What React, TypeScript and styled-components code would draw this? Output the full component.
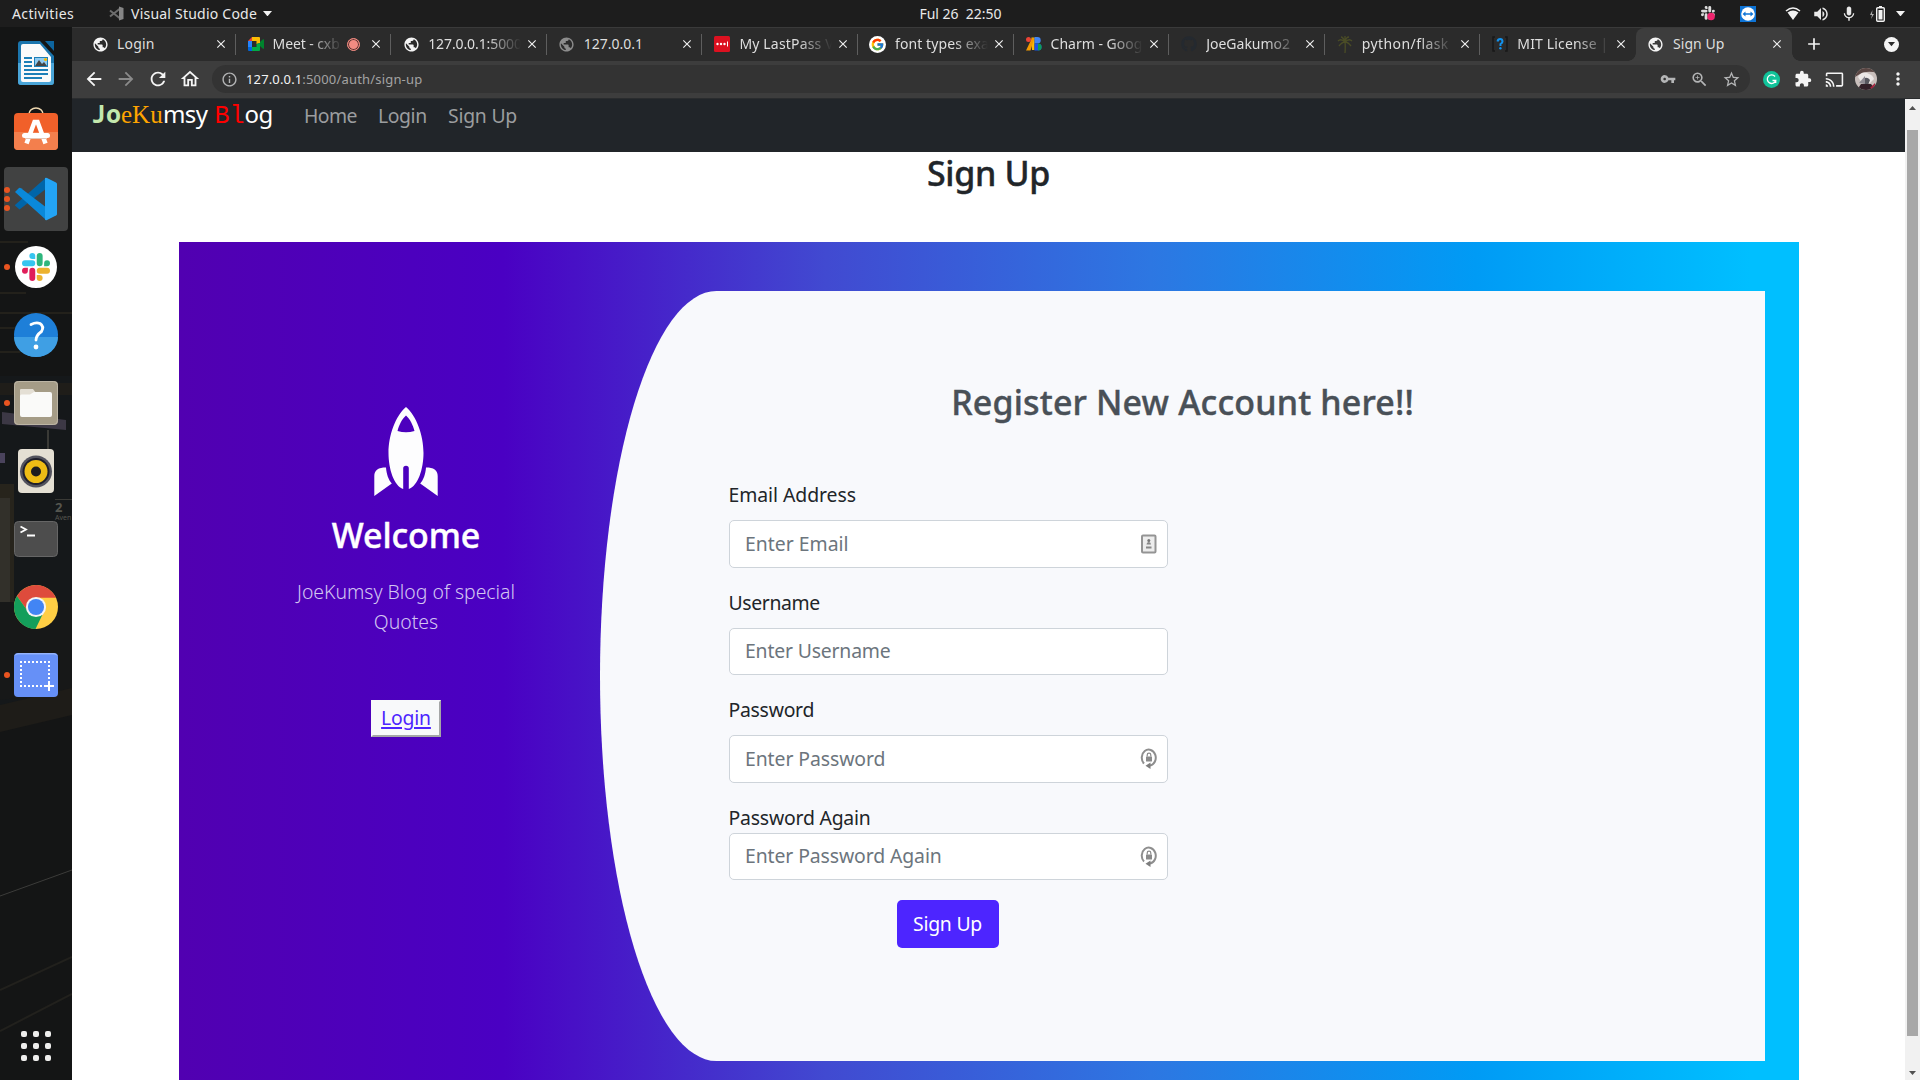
import React from 'react';
import styled, { createGlobalStyle, css } from 'styled-components';
import {
  MdArrowBack, MdArrowForward, MdRefresh, MdOutlineHome, MdInfoOutline, MdVpnKey, MdZoomIn,
  MdStarBorder, MdExtension, MdCast, MdMoreVert, MdPublic, MdMic, MdClose, MdAdd, MdVolumeUp,
} from 'react-icons/md';
import { FcGoogle } from 'react-icons/fc';
import { FaGithub } from 'react-icons/fa';

const sans = '"Noto Sans", "Open Sans", sans-serif';

const GlobalStyle = createGlobalStyle`
  *, *::before, *::after { box-sizing: border-box; }
  body { margin: 0; background: #fff; font-family: ${sans}; }
  svg { display: block; flex: none; }
`;

const Screen = styled.div`
  width: 1920px;
  height: 1080px;
  overflow: hidden;
  display: grid;
  grid-template: 27px 1fr / 72px 1fr;
`;

const Label = styled.span<{ ls?: number }>`
  letter-spacing: ${(p) => p.ls ?? 0}px;
  white-space: pre;
`;

/* ---------- system bar ---------- */

const SystemBar = styled.header`
  grid-column: 1 / -1;
  background: #1d1d1d;
  color: #e9e9e9;
  display: grid;
  grid-template-columns: 1fr auto 1fr;
  align-items: center;
  font-size: 14px;
  line-height: 27px;
  padding: 0 15px 0 12px;
`;

const Clock = styled(Label)`
  margin-left: 4px;
`;

const SystemLeft = styled.div`
  display: flex;
  align-items: center;
`;

const AppMenu = styled.div`
  display: flex;
  align-items: center;
  margin-left: 35px;
`;

const AppName = styled(Label)`
  margin: 0 6px 0 7px;
`;

const Tray = styled.div`
  display: flex;
  align-items: center;
  justify-content: flex-end;
`;

const TrayItem = styled.span<{ gap: number }>`
  display: flex;
  margin-left: ${(p) => p.gap}px;
`;

/* ---------- dock ---------- */

const Dock = styled.nav`
  position: relative;
  background: #141515;
  display: flex;
  flex-direction: column;
  gap: 4px;
  padding: 4px 4px 17px;
`;

const Wallpaper = styled.svg`
  position: absolute;
  inset: 0;
`;

const DockItem = styled.div<{ active?: boolean }>`
  position: relative;
  height: 64px;
  display: flex;
  align-items: center;
  justify-content: center;
  border-radius: 4px;
  ${(p) => p.active && css`background: #414242;`}
`;

const Running = styled.span`
  position: absolute;
  left: 0;
  top: 0;
  bottom: 0;
  display: flex;
  flex-direction: column;
  justify-content: center;
  gap: 3px;
`;

const Dot = styled.i`
  width: 6px;
  height: 6px;
  border-radius: 50%;
  background: #e95420;
`;

const AppsButton = styled.div`
  position: relative;
  margin-top: auto;
  align-self: center;
  width: 30px;
  display: grid;
  grid-template-columns: repeat(3, 6px);
  gap: 6px;
  margin-bottom: 2px;
`;

const AppsDot = styled.i`
  height: 6px;
  border-radius: 2px;
  background: #eeeeec;
`;

/* ---------- browser ---------- */

const Browser = styled.main`
  display: grid;
  grid-template-rows: 34px 38px 1fr;
  min-width: 0;
  min-height: 0;
`;

const TabStrip = styled.div`
  background: #2b2b2b;
  border-top: 1px solid #3a3a3a;
  display: flex;
  padding-left: 8px;
`;

const TabBox = styled.div<{ active?: boolean; divider?: boolean }>`
  position: relative;
  width: 155.6px;
  height: 33px;
  flex: none;
  display: flex;
  align-items: center;
  padding: 0 8px 1px 11px;
  color: #dedede;
  font-size: 14px;
  ${(p) => p.divider && css`
    &::after {
      content: '';
      position: absolute;
      right: 0;
      top: 6px;
      width: 1px;
      height: 21px;
      background: #5e5e5e;
    }
  `}
  ${(p) => p.active && css`
    background: #3d3d3d;
    border-radius: 8px 8px 0 0;
    &::before, &::after {
      content: '';
      position: absolute;
      bottom: 0;
      width: 8px;
      height: 8px;
    }
    &::before {
      left: -8px;
      background: radial-gradient(circle at 0 0, transparent 7.5px, #3d3d3d 8px);
    }
    &::after {
      right: -8px;
      background: radial-gradient(circle at 100% 0, transparent 7.5px, #3d3d3d 8px);
    }
  `}
`;

const Favicon = styled.span<{ dim?: boolean }>`
  width: 18px;
  height: 18px;
  flex: none;
  display: flex;
  align-items: center;
  justify-content: center;
  color: ${(p) => (p.dim ? '#8c8c8c' : '#f5f5f5')};
`;

const TabTitle = styled.span<{ ls: number; fade?: boolean }>`
  flex: 1;
  min-width: 0;
  margin-left: 8px;
  white-space: nowrap;
  line-height: 20px;
  letter-spacing: ${(p) => p.ls}px;
  ${(p) => p.fade && css`
    mask-image: linear-gradient(to right, #000 calc(100% - 34px), transparent 100%);
  `}
`;

const TabClose = styled.span`
  margin-left: 4px;
  display: flex;
  color: #f0f0f0;
`;

const Recording = styled.span`
  width: 13px;
  height: 13px;
  margin: 0 5px 0 4px;
  flex: none;
  border-radius: 50%;
  background: #f28b82;
  border: 1px solid #f28b82;
  box-shadow: inset 0 0 0 1px #5a3431;
`;

const NewTab = styled.span`
  display: flex;
  align-items: center;
  padding: 0 0 1px 12px;
  color: #f5f5f5;
`;

const TabSearch = styled.span`
  margin: 9px 21px 0 auto;
  width: 15px;
  height: 15px;
  border-radius: 50%;
  background: #f5f5f5;
  display: flex;
  align-items: center;
  justify-content: center;
`;

const Toolbar = styled.div`
  background: #3d3d3d;
  border-bottom: 1px solid #2a2c2e;
  display: flex;
  align-items: center;
  padding: 0 12px 1px 0;
  color: #f5f5f5;
`;

const NavButtons = styled.div`
  width: 140px;
  display: flex;
  gap: 10px;
  padding-left: 11px;
`;

const Omnibox = styled.div`
  flex: 1;
  height: 28px;
  border-radius: 14px;
  background: #333333;
  display: flex;
  align-items: center;
  padding: 0 9px 0 9px;
  color: #b4b5b6;
`;

const Url = styled.div`
  flex: 1;
  margin-left: 8px;
  font-size: 13px;
  line-height: 20px;
  color: #a3a3a3;
`;

const UrlHost = styled(Label)`
  color: #f4f4f4;
`;

const OmniActions = styled.div`
  display: flex;
  align-items: center;
  gap: 13.5px;
`;

const Extensions = styled.div`
  display: flex;
  align-items: center;
  margin-left: 13px;
`;

const Grammarly = styled.span`
  width: 17px;
  height: 17px;
  border-radius: 50%;
  background: #11c39a;
  display: flex;
  align-items: center;
  justify-content: center;
  margin-right: 14px;
`;

const CastButton = styled.span`
  display: flex;
  margin-left: 13px;
`;

const Avatar = styled.span`
  width: 22px;
  height: 22px;
  border-radius: 50%;
  overflow: hidden;
  margin: 0 11px 0 11px;
`;

/* ---------- web page ---------- */

const Viewport = styled.div`
  display: grid;
  grid-template-columns: 1fr 15px;
  min-height: 0;
`;

const Page = styled.div`
  overflow: hidden;
  background: #fff;
  color: #212529;
  font-size: 19.4px;
  line-height: 30px;
`;

const Navbar = styled.div`
  height: 53px;
  background: #212529;
  display: flex;
  align-items: flex-start;
  padding-left: 19px;
`;

const Brand = styled.div`
  width: 213px;
  margin-top: -1px;
  display: flex;
  align-items: baseline;
  color: #fff;
  font-size: 24px;
  line-height: 30px;
  white-space: pre;
`;

const BrandMint = styled.b`
  width: 30px;
  color: #c3e8ad;
  font: 700 25px/30px "Noto Sans Mono", "DejaVu Sans Mono", monospace;
`;

const BrandOrange = styled.span`
  width: 42px;
  color: #ffa500;
  font: 25px/30px "Liberation Serif", serif;
`;

const BrandRed = styled.span`
  width: 30px;
  margin-left: 7px;
  color: #ff0000;
  font: 25px/30px "Liberation Mono", monospace;
`;

const NavLink = styled.a<{ w: number; ls: number }>`
  width: ${(p) => p.w}px;
  padding-top: 2px;
  color: #9b9d9f;
  letter-spacing: ${(p) => p.ls}px;
`;

const headingFont = css`
  font-size: 34px;
  font-weight: 500;
  line-height: 42px;
  -webkit-text-stroke: 0.4px currentColor;
`;

const PageTitle = styled.h3`
  ${headingFont}
  margin: 0 0 48px;
  text-align: center;
  letter-spacing: -0.33px;
`;

const Register = styled.section`
  width: 1620px;
  height: 860px;
  margin-left: 107px;
  padding: 49px 34px 0 0;
  display: flex;
  background: linear-gradient(to right, #5100b1, #4a00c3 20%, #414ad1 40%, #2d77e2 60%, #009bf5 80%, #00bfff 97%);
`;

const Welcome = styled.aside`
  width: 421px;
  padding: 116px 0 0 33px;
  display: flex;
  flex-direction: column;
  align-items: center;
  color: #fff;
`;

const WelcomeTitle = styled.h3`
  ${headingFont}
  margin: 17px 0 21px;
  letter-spacing: -0.1px;
`;

const WelcomeText = styled.p`
  width: 230px;
  margin: 0 0 63px;
  text-align: center;
  font-weight: 300;
  color: #d3c6f1;
`;

const LoginButton = styled.a`
  width: 70px;
  height: 37px;
  background: #f8f9fa;
  border: 2px solid;
  border-color: #f8f9fa #a5a6a7 #a5a6a7 #f8f9fa;
  text-align: center;
  line-height: 31px;
  letter-spacing: -0.2px;
`;

const LoginText = styled.span`
  color: #4d25ff;
  text-decoration: underline;
  text-decoration-thickness: 2px;
  text-underline-offset: 2px;
`;

const Card = styled.div`
  flex: 1;
  height: 770px;
  padding-top: 90px;
  background: #f8f9fc;
  border-top-left-radius: 10% 50%;
  border-bottom-left-radius: 10% 50%;
`;

const CardTitle = styled.h3`
  ${headingFont}
  margin: 0 0 57px;
  text-align: center;
  letter-spacing: 0.15px;
  color: #495057;
`;

const Form = styled.form`
  width: 439px;
  margin-left: 128.5px;
  display: flex;
  flex-direction: column;
  align-items: center;
`;

const Field = styled.div<{ tight?: boolean }>`
  width: 100%;
  display: flex;
  flex-direction: column;
  gap: ${(p) => (p.tight ? 0 : 10)}px;
  margin-bottom: 20px;
`;

const FieldBox = styled.div`
  height: 47.5px;
  display: flex;
  align-items: center;
  justify-content: space-between;
  padding: 0 9px 0 15.5px;
  background: #fff;
  border: 1px solid #ced4da;
  border-radius: 5px;
  color: #6c757d;
`;

const Submit = styled.button`
  width: 102px;
  height: 48px;
  margin-right: 1px;
  border: 0;
  border-radius: 5px;
  background: #4d25ff;
  color: #fff;
  font: 19.4px/30px ${sans};
  letter-spacing: -0.24px;
  white-space: nowrap;
  padding: 0;
`;

const Scrollbar = styled.div`
  background: #f1f1f1;
  display: flex;
  flex-direction: column;
  align-items: center;
  padding: 7px 0 5px;
`;

const Thumb = styled.div`
  width: 11px;
  height: 906px;
  margin: 20px 0 auto;
  background: #a8a8a8;
`;

/* ---------- drawings ---------- */

const VsCode = () => (
  <svg width="44" height="44" viewBox="0 0 44 44">
    <path d="M1 28.5 L5.5 32.5 L33 11 V1 L31 1.5 L1 28 Z" fill="#0065a9" />
    <path d="M1 15 L5 11 Q6 10.5 7 11.2 L33 31 V43 L31 42 Z" fill="#0a89da" />
    <path d="M31 1 Q32 0.5 33 1 L42 5.5 Q43 6 43 7 V37 Q43 38 42 38.5 L33 43 Q31.5 43.6 31 42.6 Z" fill="#23a4f5" />
  </svg>
);

const slackArm =
  'M8.834 5.042a2.528 2.528 0 0 1-2.521-2.52A2.528 2.528 0 0 1 8.834 0a2.528 2.528 0 0 1 2.521 2.522v2.52H8.834z' +
  'M8.834 6.313a2.528 2.528 0 0 1 2.521 2.521 2.528 2.528 0 0 1-2.521 2.521H2.522A2.528 2.528 0 0 1 0 8.834a2.528 2.528 0 0 1 2.522-2.521h6.312z';

const SlackMark = ({ colors }: { colors: string[] }) => (
  <>
    {colors.map((c, i) => (
      <path key={i} d={slackArm} fill={c} transform={`rotate(${i * 90} 12 12)`} />
    ))}
  </>
);

const Slack = () => (
  <svg width="42" height="42" viewBox="-6 -6 36 36">
    <circle cx="12" cy="12" r="18" fill="#fff" />
    <SlackMark colors={['#36c5f0', '#2eb67d', '#ecb22e', '#e01e5a']} />
  </svg>
);

const Writer = () => (
  <svg width="36" height="44" viewBox="0 0 36 44">
    <path d="M3 0h19l14 15v26a3 3 0 0 1-3 3H3a3 3 0 0 1-3-3V3a3 3 0 0 1 3-3z" fill="#1b75ad" />
    <path d="M0 22h36v19a3 3 0 0 1-3 3H3a3 3 0 0 1-3-3z" fill="#4aa5d8" />
    <path d="M5 3h17l11 13v23a2 2 0 0 1-2 2H5a2 2 0 0 1-2-2V5a2 2 0 0 1 2-2z" fill="#fafafa" />
    <path d="M27 0h9v10z" fill="#0d659f" />
    <path d="M6 17h8M6 21h8M6 25h8M6 29h24M6 33h24M6 37h18" stroke="#1c7fb8" strokeWidth="2" />
    <path d="M16 16h14v10H16z" fill="#1c7fb8" />
    <path d="M17 17h12v8H17z" fill="#8fcaf0" />
    <path d="M17 25l4-6 3 4 2-2 3 4z" fill="#444" />
    <circle cx="27.5" cy="18.5" r="1.6" fill="#f5b800" />
  </svg>
);

const Software = () => (
  <svg width="44" height="49" viewBox="0 0 44 49">
    <path d="M15 10V7a7 6 0 0 1 14 0v3" fill="none" stroke="#f0d9b0" strokeWidth="1.6" />
    <rect x="0" y="6" width="44" height="37" rx="4" fill="#f1602a" />
    <path d="M0 25h44v14a4 4 0 0 1-4 4H4a4 4 0 0 1-4-4z" fill="#f37f4d" />
    <path d="M12.5 36.5L20.5 15h3L31.500 36.500" fill="none" stroke="#fff" strokeWidth="4.500" />
    <path d="M10.5 28.5h23" stroke="#fff" strokeWidth="5" strokeLinecap="round" />
    <path d="M11 31.5h22" stroke="#e3c7b8" strokeWidth="1" />
  </svg>
);

const Help = () => (
  <svg width="44" height="44" viewBox="0 0 44 44">
    <circle cx="22" cy="22" r="22" fill="#1e7fd8" />
    <path d="M0 24a22 20 0 0 0 44 0z" fill="#3f9fe4" />
    <path d="M17 11.5Q22 9 26 10.500Q30.500 13.500 27.500 18.500Q22 22.500 22 27" fill="none" stroke="#fff" strokeWidth="2.800" strokeLinecap="round" />
    <circle cx="22" cy="34" r="2.4" fill="#fff" />
  </svg>
);

const Files = () => (
  <svg width="44" height="44" viewBox="0 0 44 44">
    <rect width="44" height="44" rx="4" fill="#a59c87" />
    <rect x="0.5" y="0.5" width="43" height="43" rx="4" fill="none" stroke="#bcb5a5" />
    <path d="M6 9q0-1 1-1h12l3 4v8H6z" fill="#e4dfd5" />
    <path d="M6 15q0-1.500 1.500-1.500H16l4-2.500h16q2 0 2 2v21q0 2-2 2H8q-2 0-2-2z" fill="#fafaf9" />
  </svg>
);

const Rhythmbox = () => (
  <svg width="36" height="44" viewBox="0 0 36 44">
    <rect width="36" height="44" rx="4" fill="#e4dfd3" />
    <circle cx="18" cy="22.5" r="16" fill="#53535e" />
    <circle cx="18" cy="22.5" r="13.5" fill="#1f1f2c" />
    <circle cx="18" cy="22.5" r="11.5" fill="#eebc15" />
    <circle cx="18" cy="22.5" r="5" fill="#1d1d1f" />
  </svg>
);

const Terminal = () => (
  <svg width="44" height="36" viewBox="0 0 44 36">
    <rect x="0.5" y="0.5" width="43" height="35" rx="4" fill="#4d4d4d" stroke="#666" />
    <path d="M6.500 5.500l5.500 3-5.500 3M13 14.500h8" fill="none" stroke="#fff" strokeWidth="1.800" />
  </svg>
);

const Chrome = () => (
  <svg width="44" height="44" viewBox="0 0 48 48">
    <circle cx="24" cy="24" r="24" fill="#ffce44" />
    <path d="M24 24L24 14H45.800A24 24 0 0 0 3.200 12L15.300 29z" fill="#de4b3c" />
    <path d="M3.200 12A24 24 0 0 0 23.500 48L32.700 29L24 24L15.300 29z" fill="#149e5b" />
    <circle cx="24" cy="24" r="11" fill="#f4f4f4" />
    <circle cx="24" cy="24" r="8.8" fill="#4285f4" />
  </svg>
);

const Screenshot = () => (
  <svg width="44" height="44" viewBox="0 0 44 44">
    <rect width="44" height="44" rx="4" fill="#6690f7" />
    <path d="M1 2.500Q2 0.800 4 0.800H40Q42 0.800 43 2.500" fill="none" stroke="#a9c2fd" />
    <path d="M6 9h30M6 33h24" stroke="#fff" strokeWidth="2" strokeDasharray="2 2" />
    <path d="M7 12v20M35 12v16" stroke="#fff" strokeWidth="2" strokeDasharray="2 2" />
    <path d="M35 28v10M30 33h10" stroke="#fff" strokeWidth="2" />
  </svg>
);

const Rocket = () => (
  <svg width="64" height="90" viewBox="0 0 64 90" fill="#fdfdfe">
    <path
      fillRule="evenodd"
      d="M32 0C42.500 9 49.500 28 49.500 46C49.500 62 44 79 34.800 82V61.500a2.800 2.800 0 0 0-5.600 0V82C20 79 14.500 62 14.500 46C14.500 28 21.500 9 32 0ZM32 8.500C28 12 25 18 23.500 24Q32 26.500 40.500 24C39 18 36 12 32 8.500Z"
    />
    <path d="M12 60.500C12.500 67 14.500 73 17.800 76.500L0.300 89V69C0.300 63 4.500 60.500 12 60.500Z" />
    <path d="M52 60.500C51.500 67 49.500 73 46.200 76.500L63.700 89V69C63.700 63 59.500 60.500 52 60.500Z" />
  </svg>
);

const MeetIcon = () => (
  <svg width="16" height="14" viewBox="0 0 16 14">
    <path d="M0 4L4 0V4z" fill="#ea4335" />
    <path d="M4 0h7q1 0 1 1v5L8.500 7V4H4z" fill="#fbbc04" />
    <path d="M0 4h4v6H0z" fill="#2684fc" />
    <path d="M0 10h4v4H1q-1 0-1-1z" fill="#0066da" />
    <path d="M4 10h4.500V7L12 6v7q0 1-1 1H4z" fill="#00ac47" />
    <path d="M12 5l3-2.700q1-.5 1 .5v8.400q0 1-1 .5L12 9z" fill="#00832d" />
  </svg>
);

const LastPassIcon = () => (
  <svg width="16" height="16" viewBox="0 0 16 16">
    <rect width="16" height="16" rx="1.5" fill="#dc1120" />
    <g fill="#fff">
      <circle cx="3.500" cy="8" r="1.200" /><circle cx="7" cy="8" r="1.200" /><circle cx="10.500" cy="8" r="1.200" />
      <rect x="13" y="5.500" width="1" height="5" />
    </g>
  </svg>
);

const GoogleIcon = () => (
  <svg width="17" height="17" viewBox="0 0 17 17">
    <circle cx="8.5" cy="8.5" r="8.5" fill="#fff" />
    <FcGoogle x="1.5" y="1.5" size={14} />
  </svg>
);

const GoogleFontsIcon = () => (
  <svg width="16" height="14" viewBox="0 0 16 14">
    <path d="M5.500 0.500h3V13H6z" fill="#fbbc04" />
    <path d="M6 1h2.500L4.500 13.500H0z" fill="#f29900" />
    <circle cx="2.5" cy="2.5" r="2.5" fill="#ea4335" />
    <path d="M8.500 0h3a3.200 3.200 0 0 1 0 6.400h-3z" fill="#4285f4" />
    <path d="M8.500 6.400h3.500a3.600 3.600 0 0 1 0 7.200H8.500z" fill="#1a55e8" />
    <path d="M12 6.400a3.600 3.600 0 0 1 0 7.200z" fill="#0d9d57" />
  </svg>
);

const PalmIcon = () => (
  <svg width="16" height="18" viewBox="0 0 16 18" fill="none" stroke="#4a4c26" strokeWidth="1.300">
    <path d="M8 6Q8.500 12 8 18M8 7Q4 3 1 6M8 7Q12 3 15 6M8 7Q5 7 2 11M8 7Q11 7 14 11M8 7Q6 2 4 2M8 7Q9 2 12 2M8 7V1" />
  </svg>
);

const LicenseIcon = () => (
  <svg width="16" height="16" viewBox="0 0 16 16" fill="none">
    <path d="M3 1H1V15H3M13 1h2V15H13" stroke="#191919" strokeWidth="1.500" />
    <path d="M5.500 5.500Q6 3 8.200 3T10.500 5.500Q10.300 7 8.500 8V10" stroke="#1292ee" strokeWidth="2" />
    <circle cx="8.4" cy="12.3" r="1.2" fill="#1292ee" />
  </svg>
);

const Caret = ({ color = '#f2f2f2', w = 9 }: { color?: string; w?: number }) => (
  <svg width={w} height={w * 0.6} viewBox="0 0 10 6"><path d="M0 0h10L5 6z" fill={color} /></svg>
);

const LockBadge = () => (
  <svg width="18" height="21" viewBox="0 0 18 21">
    <path d="M4 15.500A7 8 0 1 1 10 17.500" fill="none" stroke="#8e8e8e" strokeWidth="2" />
    <path d="M10.500 14.500v6.500L5.500 17.800z" fill="#7d7d7d" />
    <rect x="6" y="8.5" width="6" height="5" rx="0.5" fill="#8a8a8a" />
    <path d="M7.200 8.500V7a1.800 1.800 0 0 1 3.600 0v1.500" fill="none" stroke="#8a8a8a" strokeWidth="1.200" />
  </svg>
);

const ContactBadge = () => (
  <svg width="18" height="20" viewBox="0 0 18 20">
    <rect x="2" y="1.5" width="13.5" height="17" rx="1" fill="#ededed" stroke="#949494" strokeWidth="2" />
    <circle cx="8.8" cy="6.5" r="1.5" fill="#777" />
    <path d="M6.500 10.500Q6.500 8 8.800 8T11 10.500zM6 12.500h5.500v2H6z" fill="#888" />
  </svg>
);

/* ---------- data ---------- */

type TabInfo = { title: string; icon: React.ReactNode; ls: number; dim?: boolean; fade?: boolean; recording?: boolean; active?: boolean };

const globe = <MdPublic size={17} />;

const tabs: TabInfo[] = [
  { title: 'Login', icon: globe, ls: 0.16 },
  { title: 'Meet - cxb', icon: <MeetIcon />, ls: -0.1, fade: true, recording: true },
  { title: '127.0.0.1:5000', icon: globe, ls: -0.1, fade: true },
  { title: '127.0.0.1', icon: globe, ls: 0, dim: true },
  { title: 'My LastPass V', icon: <LastPassIcon />, ls: 0.17, fade: true },
  { title: 'font types exa', icon: <GoogleIcon />, ls: 0.1, fade: true },
  { title: 'Charm - Goog', icon: <GoogleFontsIcon />, ls: 0, fade: true },
  { title: 'JoeGakumo2', icon: <FaGithub size={16} color="#24292f" />, ls: 0, fade: true },
  { title: 'python/flask', icon: <PalmIcon />, ls: 0.42, fade: true },
  { title: 'MIT License |', icon: <LicenseIcon />, ls: 0.15, fade: true },
  { title: 'Sign Up', icon: globe, ls: 0.07, active: true },
];

const dockItems: { icon: React.ReactNode; dots?: number; active?: boolean }[] = [
  { icon: <Writer /> },
  { icon: <Software /> },
  { icon: <VsCode />, dots: 3, active: true },
  { icon: <Slack />, dots: 1 },
  { icon: <Help /> },
  { icon: <Files />, dots: 1 },
  { icon: <Rhythmbox /> },
  { icon: <Terminal /> },
  { icon: <Chrome /> },
  { icon: <Screenshot />, dots: 1 },
];

const fields: { label: string; placeholder: string; lls: number; pls: number; badge?: React.ReactNode; tight?: boolean }[] = [
  { label: 'Email Address', placeholder: 'Enter Email', lls: -0.06, pls: 0 },
  { label: 'Username', placeholder: 'Enter Username', lls: -0.38, pls: -0.18 },
  { label: 'Password', placeholder: 'Enter Password', lls: -0.26, pls: -0.08, badge: <LockBadge /> },
  { label: 'Password Again', placeholder: 'Enter Password Again', lls: -0.2, pls: -0.1, badge: <LockBadge />, tight: true },
];
fields[0].badge = <ContactBadge />;

/* ---------- sections ---------- */

const TopBar = () => (
  <SystemBar>
    <SystemLeft>
      <Label ls={0.37}>Activities</Label>
      <AppMenu>
        <svg width="15" height="15" viewBox="0 0 15 15">
          <path d="M1 4.500L10.500 12M1 10.500L10.500 3" stroke="#6d6d6d" strokeWidth="2" />
          <path d="M10 0.500l4.500 1.500v11L10 14.500z" fill="#858585" />
        </svg>
        <AppName ls={0.22}>Visual Studio Code</AppName>
        <Caret />
      </AppMenu>
    </SystemLeft>
    <Clock>Ful 26  22:50</Clock>
    <Tray>
      <TrayItem gap={0}>
        <svg width="15" height="15" viewBox="0 0 26 26">
          <SlackMark colors={['#ddd', '#ddd', '#ddd', '#ddd']} />
          <circle cx="17.5" cy="18" r="6.5" fill="#f0246e" />
        </svg>
      </TrayItem>
      <TrayItem gap={24}>
        <svg width="16" height="16" viewBox="0 0 16 16">
          <rect width="16" height="16" fill="#0e74d6" />
          <circle cx="8" cy="8" r="6.8" fill="#fff" />
          <path d="M2.500 8L5.500 5.500v1.700h5V5.500L13.500 8l-3 2.500V8.800h-5v1.700z" fill="#0e74d6" />
        </svg>
      </TrayItem>
      <TrayItem gap={29}>
        <svg width="16" height="13" viewBox="0 0 16 13" fill="#f2f2f2">
          <path d="M1 4Q8-2 15 4" fill="none" stroke="#f2f2f2" strokeWidth="1.500" />
          <path d="M2.500 5.500Q8 1.500 13.500 5.500L8 13z" />
        </svg>
      </TrayItem>
      <TrayItem gap={11}><MdVolumeUp size={18} /></TrayItem>
      <TrayItem gap={10}><MdMic size={18} /></TrayItem>
      <TrayItem gap={12}>
        <svg width="16" height="16" viewBox="0 0 16 16">
          <path d="M2.500 4L0 9h2L1 13l3-5H2z" fill="#aaa" />
          <path d="M9 0h3v2H9z" fill="#f2f2f2" />
          <rect x="6.7" y="1.7" width="7.6" height="13.6" rx="1" fill="none" stroke="#f2f2f2" strokeWidth="1.4" />
          <path d="M8.500 4h4v9.500h-4z" fill="#f2f2f2" />
        </svg>
      </TrayItem>
      <TrayItem gap={10}><Caret /></TrayItem>
    </Tray>
  </SystemBar>
);

const SideDock = () => (
  <Dock>
    <Wallpaper width="72" height="1053" viewBox="0 27 72 1053">
      <g stroke="#3a3426" strokeWidth="1" opacity="0.8">
        <path d="M0 242h28M0 293h26M0 313h72M0 328h30M0 352h20" />
      </g>
      <rect x="0" y="376" width="72" height="330" fill="#15181a" />
      <path d="M0 383h72v12H0z" fill="#1f1d19" />
      <path d="M2 412L66 420V430L2 424z" fill="#3c3845" />
      <path d="M0 453h5v10H0z" fill="#4a435c" />
      <path d="M0 484h14v118H0z" fill="#27241c" />
      <path d="M0 498h10v104H0z" fill="#32302a" />
      <path d="M47 430h2v20h-2zM55 499h17v1H55z" fill="#3a3a36" />
      <text x="55" y="512" fontSize="13" fontWeight="700" fill="#55564f">2</text>
      <text x="55" y="520" fontSize="7" fill="#55564f">Aven</text>
      <path d="M0 602H72V692L0 700z" fill="#171818" />
      <path d="M0 705L72 688V715L0 732z" fill="#1e1c18" />
      <path d="M0 896L72 870" stroke="#3c3c3a" />
      <path d="M0 990L72 957M0 1031L72 994" fill="none" stroke="#22211d" strokeWidth="2" />
    </Wallpaper>
    {dockItems.map((item, i) => (
      <DockItem key={i} active={item.active}>
        {item.dots && (
          <Running>{Array.from({ length: item.dots }, (_, d) => <Dot key={d} />)}</Running>
        )}
        {item.icon}
      </DockItem>
    ))}
    <AppsButton>{Array.from({ length: 9 }, (_, i) => <AppsDot key={i} />)}</AppsButton>
  </Dock>
);

const Tabs = () => (
  <TabStrip>
    {tabs.map((t, i) => (
      <TabBox key={i} active={t.active} divider={i < 9}>
        <Favicon dim={t.dim}>{t.icon}</Favicon>
        <TabTitle ls={t.ls} fade={t.fade}>{t.title}</TabTitle>
        {t.recording && <Recording />}
        <TabClose><MdClose size={14} /></TabClose>
      </TabBox>
    ))}
    <NewTab><MdAdd size={20} /></NewTab>
    <TabSearch><Caret color="#2b2b2b" w={7} /></TabSearch>
  </TabStrip>
);

const AddressBar = () => (
  <Toolbar>
    <NavButtons>
      <MdArrowBack size={22} />
      <MdArrowForward size={22} color="#8b8b8b" />
      <MdRefresh size={22} />
      <MdOutlineHome size={22} />
    </NavButtons>
    <Omnibox>
      <MdInfoOutline size={17} />
      <Url><UrlHost ls={0.14}>127.0.0.1</UrlHost><Label ls={0.18}>:5000/auth/sign-up</Label></Url>
      <OmniActions>
        <MdVpnKey size={16} />
        <MdZoomIn size={19} />
        <MdStarBorder size={19} />
      </OmniActions>
    </Omnibox>
    <Extensions>
      <Grammarly>
        <svg width="11" height="11" viewBox="0 0 11 11" fill="none" stroke="#fff" strokeWidth="1.300">
          <path d="M9 2.500A4.300 4.300 0 1 0 9.700 6.500H6.500M9.700 6v3" />
        </svg>
      </Grammarly>
      <MdExtension size={18} />
      <CastButton><MdCast size={19} /></CastButton>
      <Avatar>
        <svg width="22" height="22" viewBox="0 0 22 22">
          <rect width="22" height="22" fill="#c9bfbc" />
          <path d="M0 0h22v5Q11 1 0 9z" fill="#5a4643" />
          <path d="M3 9Q6 3 12 5T19 11L15 15H7z" fill="#ece7e6" />
          <path d="M8 11q4-3 7 1l-2 5H9z" fill="#57565e" />
          <path d="M2 22l4-6h10l5 6z" fill="#332029" />
          <path d="M4 15L10 8v8z" fill="#8e8a92" />
          <path d="M15 20l5-5v7z" fill="#a8203c" />
        </svg>
      </Avatar>
      <MdMoreVert size={20} />
    </Extensions>
  </Toolbar>
);

const SignUpPage = () => (
  <Page>
    <Navbar>
      <Brand>
        <BrandMint>Jo</BrandMint>
        <BrandOrange>eKu</BrandOrange>
        <Label ls={-0.6}>msy</Label>
        <BrandRed>Bl</BrandRed>
        <Label ls={-0.5}>og</Label>
      </Brand>
      <NavLink w={74} ls={-0.6}>Home</NavLink>
      <NavLink w={70} ls={-0.4}>Login</NavLink>
      <NavLink w={80} ls={-0.24}>Sign Up</NavLink>
    </Navbar>
    <PageTitle>Sign Up</PageTitle>
    <Register>
      <Welcome>
        <Rocket />
        <WelcomeTitle>Welcome</WelcomeTitle>
        <WelcomeText>JoeKumsy Blog of special Quotes</WelcomeText>
        <LoginButton><LoginText>Login</LoginText></LoginButton>
      </Welcome>
      <Card>
        <CardTitle>Register New Account here!!</CardTitle>
        <Form>
          {fields.map((f) => (
            <Field key={f.label} tight={f.tight}>
              <Label ls={f.lls}>{f.label}</Label>
              <FieldBox><Label ls={f.pls}>{f.placeholder}</Label>{f.badge}</FieldBox>
            </Field>
          ))}
          <Submit type="button">Sign Up</Submit>
        </Form>
      </Card>
    </Register>
  </Page>
);

export default function App() {
  return (
    <Screen>
      <GlobalStyle />
      <TopBar />
      <SideDock />
      <Browser>
        <Tabs />
        <AddressBar />
        <Viewport>
          <SignUpPage />
          <Scrollbar>
            <svg width="7" height="4" viewBox="0 0 7 4"><path d="M0 4h7L3.500 0z" fill="#505050" /></svg>
            <Thumb />
            <svg width="7" height="4" viewBox="0 0 7 4"><path d="M0 0h7L3.500 4z" fill="#505050" /></svg>
          </Scrollbar>
        </Viewport>
      </Browser>
    </Screen>
  );
}
